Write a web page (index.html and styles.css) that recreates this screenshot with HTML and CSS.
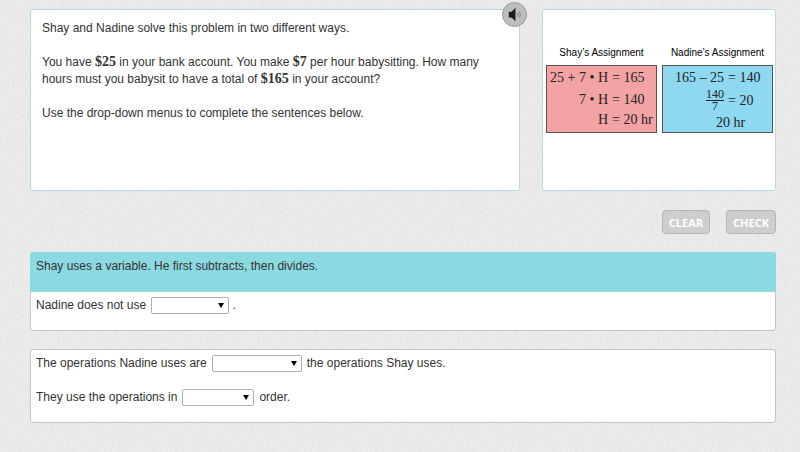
FILE: index.html
```html
<!DOCTYPE html>
<html lang="en">
<head>
    <meta charset="UTF-8">
    <meta name="viewport" content="width=device-width, initial-scale=1.0">
    <title>Two-Step Problems</title>
    <link rel="stylesheet" href="styles.css">
</head>
<body>
    <main class="page">
        <div class="top">
            <section class="card problem">
                <p>Shay and Nadine solve this problem in two different ways.</p>
                <p>You have <span class="math">$25</span> in your bank account. You make <span class="math">$7</span> per hour babysitting. How many hours must you babysit to have a total of <span class="math">$165</span> in your account?</p>
                <p>Use the drop-down menus to complete the sentences below.</p>
                <button class="audio" type="button" aria-label="Listen">
                    <svg width="23" height="23" viewBox="0 0 24 24">
                        <path d="M6 9h3l4-4v14l-4-4H6z" fill="#1c1c1c"/>
                        <path d="M15 10q1.500 2 0 4M17 9q2.500 3 0 6" fill="none" stroke="#777" stroke-width="1"/>
                    </svg>
                </button>
            </section>

            <section class="card work">
                <figure class="assignment">
                    <figcaption>Shay’s Assignment</figcaption>
                    <div class="steps shay">
                        <span class="left">25 + 7 • H</span><span>= 165</span>
                        <span class="left">7 • H</span><span>= 140</span>
                        <span class="left">H</span><span>= 20 hr</span>
                    </div>
                </figure>
                <figure class="assignment">
                    <figcaption>Nadine’s Assignment</figcaption>
                    <div class="steps nadine">
                        <span class="left">165 – 25</span><span>= 140</span>
                        <span class="left fraction"><span class="top-number">140</span><span>7</span></span><span>= 20</span>
                        <span class="answer">20 hr</span>
                    </div>
                </figure>
            </section>
        </div>

        <div class="actions">
            <button class="btn" type="button">CLEAR</button>
            <button class="btn" type="button">CHECK</button>
        </div>

        <section class="panel">
            <div class="panel-head">Shay uses a variable. He first subtracts, then divides.</div>
            <div class="sentence">
                <label for="uses">Nadine does not use</label>
                <span><select id="uses" class="medium"><option></option><option>a variable</option></select> .</span>
            </div>
        </section>

        <section class="panel">
            <div class="sentence">
                <label for="compare">The operations Nadine uses are</label>
                <select id="compare" class="wide"><option></option><option>the same as</option><option>different from</option></select>
                <span>the operations Shay uses.</span>
            </div>
            <div class="sentence">
                <label for="order">They use the operations in</label>
                <select id="order" class="narrow"><option></option><option>the same</option><option>a different</option></select>
                <span>order.</span>
            </div>
        </section>
    </main>
</body>
</html>
```
FILE: styles.css
```css
* {
    box-sizing: border-box;
}

body {
    margin: 0;
    min-height: 100vh;
    font-family: "Liberation Sans", Arial, sans-serif;
    font-size: 12px;
    line-height: 17px;
    color: #333;
    background-color: #ebebeb;
    /* paper grain */
    background-image: url("data:image/svg+xml,%3Csvg xmlns='http://www.w3.org/2000/svg' width='200' height='200'%3E%3Cfilter id='n'%3E%3CfeTurbulence type='fractalNoise' baseFrequency='.4' numOctaves='2' stitchTiles='stitch'/%3E%3CfeColorMatrix values='0 0 0 0 .5 0 0 0 0 .5 0 0 0 0 .5 .4 0 0 0 -.17'/%3E%3C/filter%3E%3Crect width='200' height='200' filter='url(%23n)'/%3E%3C/svg%3E");
}

.page {
    padding: 9px 24px 10px 30px;
}

.top {
    display: grid;
    grid-template-columns: 490fr 234fr;
    gap: 22px;
}

.card {
    background: #fff;
    border: 1px solid #b4dce6;
    border-radius: 3px;
    min-height: 182px;
}

.problem {
    position: relative;
    padding: 10px 24px 10px 11px;
}

.problem p {
    margin: 0 0 17px;
}

.math {
    font-family: "Liberation Serif", "Times New Roman", serif;
    font-size: 14px;
    font-weight: bold;
    line-height: 16px;
}

.audio {
    position: absolute;
    top: -8px;
    right: -8px;
    width: 25px;
    height: 25px;
    padding: 0;
    border: 1px solid #999;
    border-radius: 50%;
    background: #bbbebe;
    cursor: pointer;
}

.audio svg {
    display: block;
}

.work {
    display: grid;
    grid-template-columns: 1fr 1fr;
    gap: 5px;
    align-content: start;
    padding: 34px 2px 10px 3px;
}

.assignment {
    margin: 0;
    color: #222;
}

.assignment figcaption {
    height: 21px;
    font-size: 10px;
    line-height: 18px;
    text-align: center;
    white-space: nowrap;
    color: #000;
}

.steps {
    display: grid;
    grid-template-columns: 61px 1fr;
    grid-template-rows: 22px 22px 18px;
    column-gap: 4px;
    align-items: center;
    height: 68px;
    border: 1px solid #555;
    font-family: "Liberation Serif", "Times New Roman", serif;
    font-size: 14px;
    white-space: nowrap;
}

.left {
    text-align: right;
}

.shay {
    background: #f4a3a5;
}

.nadine {
    grid-template-rows: 22px 24px 20px;
    background: #8fd8f2;
}

.fraction {
    justify-self: end;
    font-size: 12px;
    line-height: 11px;
    text-align: center;
}

.fraction span {
    display: block;
}

.top-number {
    border-bottom: 1px solid #222;
}

.answer {
    grid-column: 1 / -1;
    padding-left: 53px;
}

.actions {
    display: flex;
    justify-content: flex-end;
    gap: 16px;
    margin: 19px 0 18px;
}

.btn {
    min-width: 48px;
    height: 24px;
    padding: 0 6px;
    border: 1px solid #b4b5b5;
    border-radius: 4px;
    background: #cdcfcf;
    color: #fff;
    font-family: "Open Sans", sans-serif;
    font-size: 11px;
    font-weight: bold;
    cursor: pointer;
}

.panel {
    margin-bottom: 18px;
    padding-bottom: 11px;
    border: 1px solid #c4c4c4;
    border-radius: 3px;
    background: #fff;
}

.panel-head {
    min-height: 40px;
    margin: -1px -1px 0;
    padding: 6px;
    border-radius: 3px 3px 0 0;
    background: #8bd9e1;
}

.sentence {
    display: flex;
    align-items: center;
    gap: 5px;
    padding: 5px;
}

.sentence + .sentence {
    padding-top: 12px;
}

select {
    appearance: none;
    height: 17px;
    padding: 0 4px;
    border: 1px solid #b0b0b0;
    border-radius: 2px;
    background: #fff url("data:image/svg+xml,%3Csvg xmlns='http://www.w3.org/2000/svg' width='6' height='5'%3E%3Cpath d='M0 0h6L3 5z'/%3E%3C/svg%3E") no-repeat right 4px center;
    font-size: 11px;
    vertical-align: middle;
}

.narrow {
    width: 72px;
}

.medium {
    width: 78px;
}

.wide {
    width: 90px;
}
```
